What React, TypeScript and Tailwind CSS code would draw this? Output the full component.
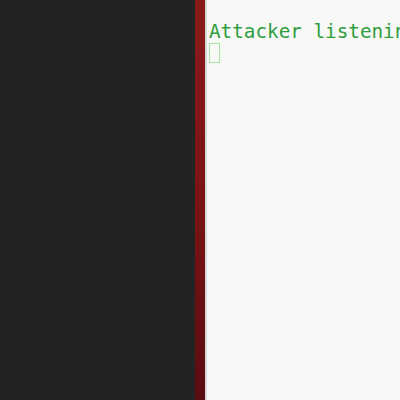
export default function App() {
  return (
    <div className="flex h-[400px] w-[400px] overflow-hidden bg-[#232323]">
      {/* dark pane */}
      <div className="h-full w-[195px] shrink-0 bg-[#232323]"></div>

      {/* red window edge */}
      <div className="h-full w-[10px] shrink-0 bg-gradient-to-b from-[#8a1a1a] via-[#7a1414] to-[#5a0c12]"></div>
      <div className="h-full w-[2px] shrink-0 bg-[#d8d8d8]"></div>

      {/* terminal */}
      <div className="h-full flex-1 overflow-hidden bg-[#f8f8f7] pl-[2px] pt-[21px]">
        <div className="whitespace-nowrap font-['DejaVu_Sans_Mono','Liberation_Mono',monospace] text-[19.3px] leading-[22px] text-[#2e9e3e]">
          Attacker listening
        </div>
        <div className="h-[20px] w-[11px] border border-[#a6e3a6]"></div>
      </div>
    </div>
  );
}
